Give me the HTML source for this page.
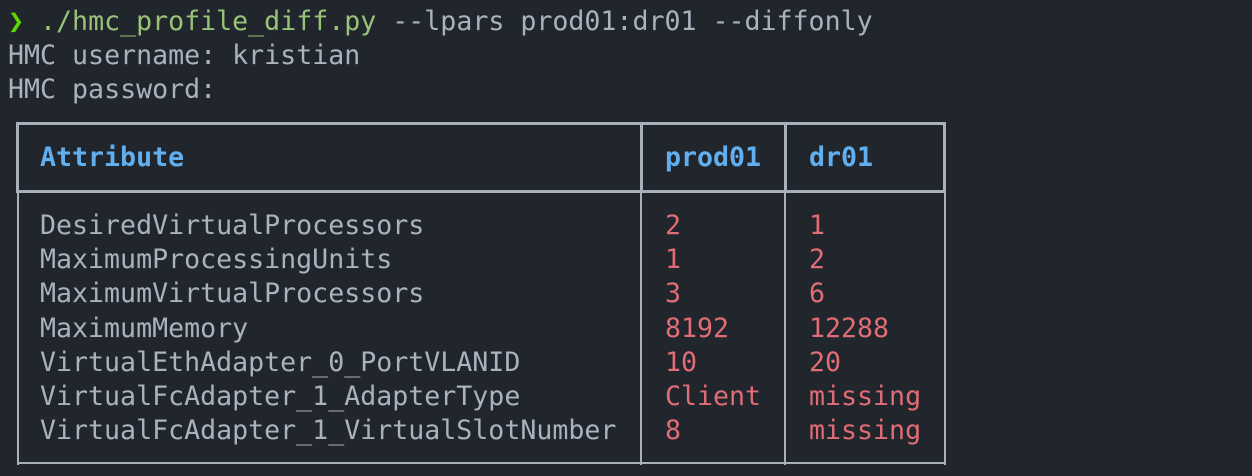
<!DOCTYPE html>
<html><head><meta charset="utf-8"><style>
body{margin:0;width:1252px;height:476px;background:#21252c;overflow:hidden;position:relative;font-family:"DejaVu Sans Mono","Liberation Mono",monospace;font-size:26.6px;color:#abb2bf}
.t{position:absolute;white-space:pre;line-height:34.2px}
.g{color:#98c379}.p{color:#5fd700;font-weight:bold}.b{color:#61afef;font-weight:bold}.r{color:#e06c75}
.l{position:absolute;background:#a9afbb}
</style></head><body>
<div class="t" style="left:8px;top:5px"><span class="p">❯</span> <span class="g">./hmc_profile_diff.py</span> --lpars prod01:dr01 --diffonly</div>
<div class="t" style="left:8px;top:39px">HMC username: kristian</div>
<div class="t" style="left:8px;top:73px">HMC password:</div>
<div class="l" style="left:16px;top:122px;width:930px;height:3px"></div>
<div class="l" style="left:16px;top:190px;width:930px;height:3px"></div>
<div class="l" style="left:16px;top:122px;width:3px;height:71px"></div>
<div class="l" style="left:943px;top:122px;width:3px;height:71px"></div>
<div class="l" style="left:640px;top:122px;width:3px;height:71px"></div>
<div class="l" style="left:784px;top:122px;width:3px;height:71px"></div>
<div class="l" style="left:17px;top:193px;width:2px;height:272px"></div>
<div class="l" style="left:944px;top:193px;width:2px;height:272px"></div>
<div class="l" style="left:640px;top:193px;width:2px;height:272px"></div>
<div class="l" style="left:784px;top:193px;width:2px;height:272px"></div>
<div class="l" style="left:17px;top:462px;width:929px;height:2px"></div>
<div class="t b" style="left:40px;top:141px">Attribute</div>
<div class="t b" style="left:665px;top:141px">prod01</div>
<div class="t b" style="left:809px;top:141px">dr01</div>
<div class="t" style="left:40px;top:209px">DesiredVirtualProcessors
MaximumProcessingUnits
MaximumVirtualProcessors
MaximumMemory
VirtualEthAdapter_0_PortVLANID
VirtualFcAdapter_1_AdapterType
VirtualFcAdapter_1_VirtualSlotNumber</div>
<div class="t r" style="left:665px;top:209px">2
1
3
8192
10
Client
8</div>
<div class="t r" style="left:809px;top:209px">1
2
6
12288
20
missing
missing</div>
</body></html>
